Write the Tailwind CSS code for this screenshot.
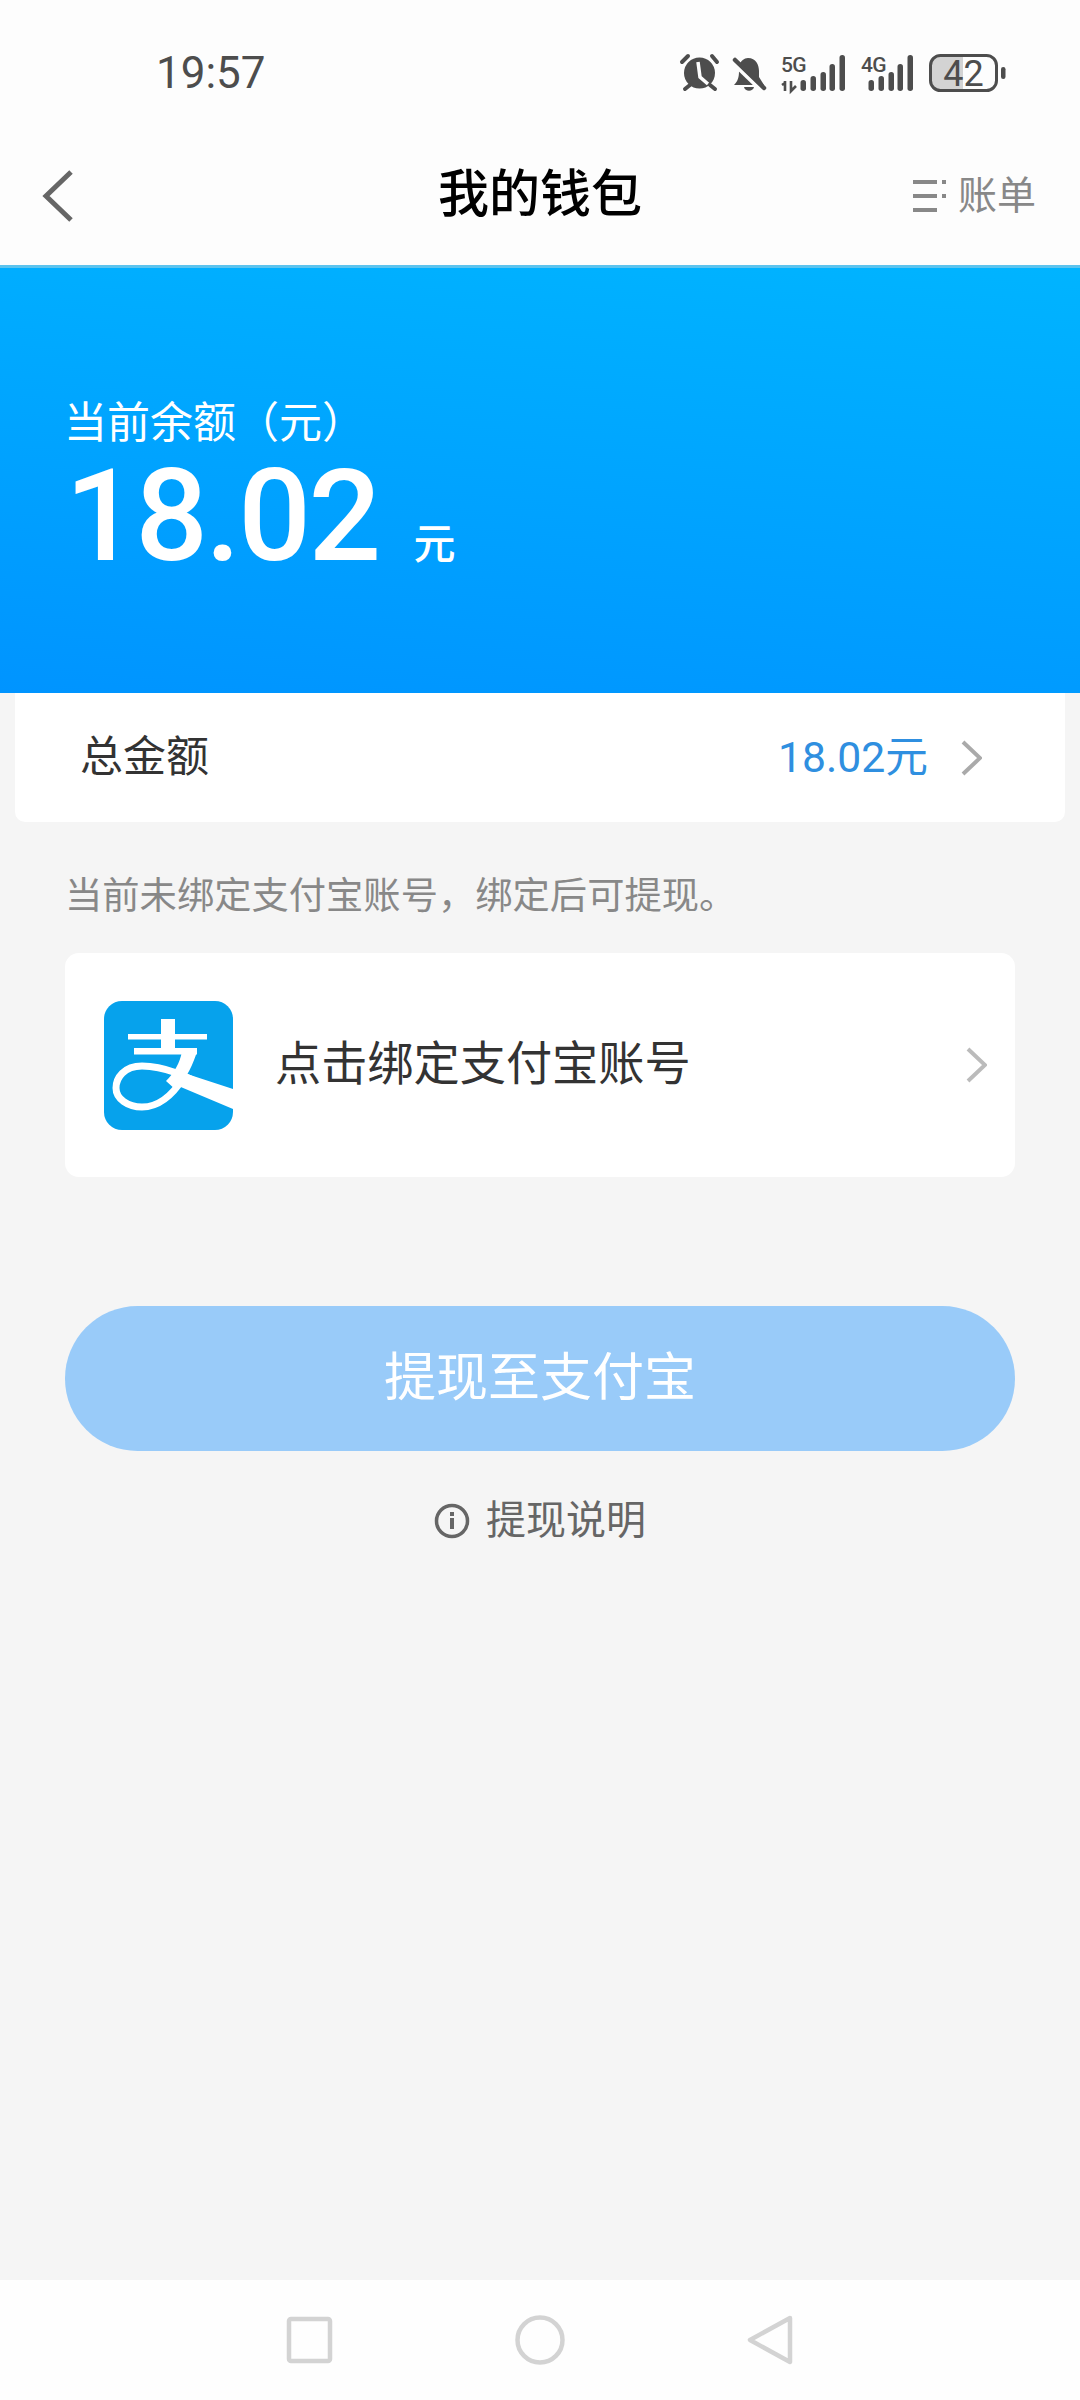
<!DOCTYPE html>
<html lang="zh-CN">
<head>
  <meta charset="UTF-8">
  <title>我的钱包</title>
  <meta name="viewport" content="width=device-width, initial-scale=1.0">
  <script src="https://cdn.jsdelivr.net/npm/@tailwindcss/browser@4"></script>
</head>
<body class="w-[1080px] h-[2400px] bg-[#f5f5f5] font-[Roboto,'Noto_Sans_CJK_SC',sans-serif] flex flex-col overflow-hidden">

  <!-- status bar + title -->
  <header class="h-[265px] bg-[#fdfdfd] shrink-0">
    <div class="h-[146px] pt-[50px] pl-[156px] pr-[72px] flex items-start justify-between">
      <span class="text-[44px] leading-[46px] text-[#4d4d4d]">19:57</span>
      <svg width="330" height="42" viewBox="0 0 330 42" class="mt-[3px]" fill="#4d4d4d">
        <!-- alarm -->
        <path d="M4 9 L10 3 M34 3 L39 9" stroke="#4d4d4d" stroke-width="4" stroke-linecap="round"/>
        <circle cx="21.5" cy="20" r="15.5"/>
        <path d="M20 9 L22 24 L30 31" stroke="#fdfdfd" stroke-width="3.5" fill="none"/>
        <path d="M12 32 L7 36 M32 32 L37 36" stroke="#4d4d4d" stroke-width="4" stroke-linecap="round"/>
        <!-- bell off -->
        <path d="M70 5 C78 5 81 12 81 18 L81 24 L86 32 L56 32 C60 28 61 24 61 18 L61 12 C63 8 66 5 70 5Z"/>
        <path d="M66 34 H76 C75 39 67 39 66 34Z"/>
        <path d="M55 10 L84 38" stroke="#fdfdfd" stroke-width="4"/>
        <path d="M57 7 L86 35" stroke="#4d4d4d" stroke-width="4.5" stroke-linecap="round"/>
        <!-- 5G -->
        <text x="103" y="19" font-family="Roboto" font-size="21" font-weight="500" letter-spacing="-0.6">5G</text>
        <path d="M107 30 L104 32 M107 28 V38 M113 28 V38 L118 33" stroke="#4d4d4d" stroke-width="2.6" fill="none"/>
        <rect x="122.5" y="27" width="5.5" height="11" rx="2.7"/>
        <rect x="132.5" y="23" width="5.5" height="15" rx="2.7"/>
        <rect x="142.5" y="19" width="5.5" height="19" rx="2.7"/>
        <rect x="151.5" y="11" width="5.5" height="27" rx="2.7"/>
        <rect x="161.5" y="2" width="5.5" height="36" rx="2.7"/>
        <!-- 4G -->
        <text x="183" y="19" font-family="Roboto" font-size="21" font-weight="500" letter-spacing="-0.6">4G</text>
        <rect x="190.5" y="27" width="5.5" height="11" rx="2.7"/>
        <rect x="200.5" y="23" width="5.5" height="15" rx="2.7"/>
        <rect x="210.5" y="19" width="5.5" height="19" rx="2.7"/>
        <rect x="219.5" y="11" width="5.5" height="27" rx="2.7"/>
        <rect x="229.5" y="2" width="5.5" height="36" rx="2.7"/>
        <!-- battery -->
        <rect x="252.5" y="2.5" width="66" height="35" rx="10" fill="#fdfdfd"/>
        <path d="M262 2.5 H285 V37.5 H262 C256 37.5 252.5 34 252.5 28 V12 C252.5 6 256 2.5 262 2.5Z" fill="#d3d3d3"/>
        <rect x="252.5" y="2.5" width="66" height="35" rx="10" fill="none" stroke="#4d4d4d" stroke-width="3"/>
        <rect x="323" y="14" width="4.5" height="12" rx="2.2"/>
        <text x="285.5" y="33" text-anchor="middle" font-family="Roboto" font-size="36" fill="#4d4d4d">42</text>
      </svg>
    </div>
    <div class="grid grid-cols-[1fr_auto_1fr] items-center h-[96px]">
      <div class="pl-[42px] mt-[4px]">
        <svg width="32" height="52" viewBox="0 0 32 52" fill="none" stroke="#666" stroke-width="5"><path d="M29 2 L4 26 L29 50"/></svg>
      </div>
      <h1 class="text-[51px] leading-[60px] font-medium text-black mt-[2px]">我的钱包</h1>
      <div class="flex items-center justify-end pr-[44px] gap-[11px] text-[39px] leading-[44px] text-[#888] mt-[4px]">
        <svg width="34" height="32" viewBox="0 0 34 32" fill="#888">
          <rect width="24" height="4"/><rect y="14" width="24" height="4"/><rect y="28" width="24" height="4"/>
          <rect x="29" width="4" height="4"/><rect x="29" y="14" width="4" height="4"/>
        </svg>
        <span>账单</span>
      </div>
    </div>
  </header>

  <!-- balance banner -->
  <section class="h-[428px] shrink-0 border-t-[3px] border-[#5cc3ee] bg-linear-[186deg,#00b4ff,#0094ff] pl-[65px] pt-[130px] text-white">
    <p class="text-[43px] leading-[50px] -ml-[1px]">当前余额（元）</p>
    <div class="flex items-end mt-[8px]">
      <span class="text-[128px] leading-[120px] font-medium tracking-[-2.6px]">18.02</span>
      <span class="text-[42px] leading-[50px] font-medium ml-[35px] mb-[6px]">元</span>
    </div>
  </section>

  <!-- total amount -->
  <div class="mx-[15px] h-[129px] shrink-0 bg-white rounded-b-[10px] flex items-center pl-[65px] pr-[83px]">
    <span class="text-[43px] text-[#333]">总金额</span>
    <span class="ml-auto text-[42.7px] text-[#2f8fe0]">18.02元</span>
    <svg class="ml-[33px]" width="21" height="36" viewBox="0 0 21 36" fill="none" stroke="#aaa" stroke-width="4"><path d="M2 2 L19 18 L2 34"/></svg>
  </div>

  <p class="mx-[65px] mt-[52px] text-[37.3px] leading-[44px] text-[#888]">当前未绑定支付宝账号，绑定后可提现。</p>

  <!-- bind alipay -->
  <div class="mx-[65px] mt-[35px] h-[224px] shrink-0 bg-white rounded-[14px] flex items-center pl-[39px] pr-[28px]">
    <div class="w-[129px] h-[129px] rounded-[18px] overflow-hidden bg-[#06a2ec] shrink-0">
      <svg width="129" height="129" viewBox="0 0 129 129" fill="#fff">
        <rect x="57" y="18" width="14" height="32"/>
        <rect x="24" y="33" width="79" height="5.5"/>
        <rect x="30" y="47" width="63" height="6.5"/>
        <path d="M78 50 L93 50 C90 62 82 78 72 89 L62 80 C70 72 76 62 78 50Z"/>
        <path d="M129 88 L129 108 L72 84 L80 72Z"/>
        <path d="M120 94 C100 86 70 65 38 65 C20 65 12 77 12 87 C12 98 24 106 38 106 C56 106 70 92 80 76" fill="none" stroke="#fff" stroke-width="7"/>
      </svg>
    </div>
    <span class="ml-[42px] text-[46.2px] text-[#333]">点击绑定支付宝账号</span>
    <svg class="ml-auto" width="21" height="36" viewBox="0 0 21 36" fill="none" stroke="#bbb" stroke-width="4"><path d="M2 2 L19 18 L2 34"/></svg>
  </div>

  <button class="mx-[65px] mt-[129px] h-[145px] shrink-0 rounded-full bg-[#99cbf9] text-white text-[52px]">提现至支付宝</button>

  <div class="mt-[42px] flex items-center justify-center gap-[16px] text-[40px] leading-[56px] text-[#666]">
    <svg width="36" height="36" viewBox="0 0 36 36" fill="none">
      <circle cx="18" cy="18" r="15.5" stroke="#666" stroke-width="3.5"/>
      <rect x="16" y="15" width="4" height="11" fill="#666"/>
      <rect x="16" y="9" width="4" height="4" fill="#666"/>
    </svg>
    <span>提现说明</span>
  </div>

  <!-- system nav -->
  <nav class="mt-auto h-[120px] shrink-0 bg-[#fefefe]">
    <svg class="mx-auto mt-[33px]" width="520" height="54" viewBox="0 0 520 54" fill="none" stroke="#d3d3d3" stroke-width="4.5" stroke-linejoin="round">
      <rect x="9" y="6" width="41" height="42" rx="2"/>
      <circle cx="260" cy="27" r="22.5"/>
      <path d="M510 5 L470 27 L510 49 Z"/>
    </svg>
  </nav>

</body>
</html>
